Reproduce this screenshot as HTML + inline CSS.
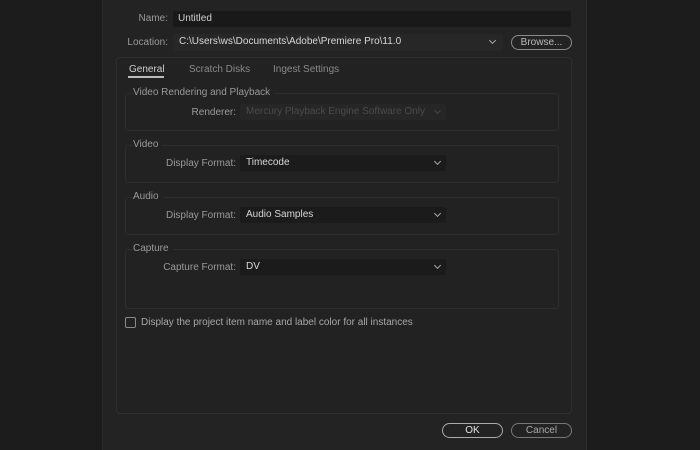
<!DOCTYPE html><html><head><style>
body{margin:0;width:700px;height:450px;background:#1c1c1c;position:relative;overflow:hidden;font-family:"Liberation Sans",sans-serif;font-size:10px;color:#a8a8a8}
div,span{position:absolute;box-sizing:border-box;white-space:nowrap}
.dlg{left:102px;top:0;width:485px;height:450px;background:#232323;border-left:1px solid #2c2c2c;border-right:1px solid #2c2c2c}
.lbl{text-align:right;color:#9a9a9a}
.inp{background:#191919;border-radius:2px;color:#d0d0d0;padding-left:5px;line-height:16px}
.sel{background:#1b1b1b;color:#d8d8d8;padding-left:6px;line-height:16px;border-radius:2px}
.chev{right:6px;top:4px;width:5px;height:5px;border-right:1.3px solid #aaa;border-bottom:1.3px solid #aaa;transform:rotate(45deg)}
.grp{border:1px solid #2d2d2d;border-radius:3px;left:125px;width:434px}
.gt{left:133px;color:#9a9a9a;background:#222;padding-right:4px}
.btn{border:1.5px solid #8a8a8a;border-radius:8px;display:flex;align-items:center;justify-content:center;color:#cfcfcf}
</style></head><body>
<div class="dlg"></div>
<div class="lbl" style="left:100px;width:68px;top:13px">Name:</div>
<div class="inp" style="left:173px;top:11px;width:398px;height:16px">Untitled</div>
<div class="lbl" style="left:100px;width:68px;top:37px">Location:</div>
<div class="sel" style="left:173px;top:34px;width:330px;height:17px;background:#272727">C:\Users\ws\Documents\Adobe\Premiere Pro\11.0<div class="chev" style="right:8px"></div></div>
<div class="btn" style="left:511px;top:35px;width:61px;height:15px;color:#bbb">Browse...</div>
<div style="left:116px;top:57px;width:456px;height:357px;border:1px solid #2e2e2e;border-radius:4px;background:#222"></div>
<div style="left:129px;top:64px;color:#d0d0d0">General</div>
<div style="left:128px;top:76px;width:36px;height:1.5px;background:#bbb"></div>
<div style="left:189px;top:64px;color:#8a8a8a">Scratch Disks</div>
<div style="left:273px;top:64px;color:#8a8a8a">Ingest Settings</div>
<div class="grp" style="top:93px;height:38px"></div><div class="gt" style="top:87px">Video Rendering and Playback</div>
<div class="lbl" style="left:150px;width:86px;top:107px">Renderer:</div>
<div class="sel" style="left:240px;top:104px;width:206px;height:16px;background:#262626;color:#4a4a4a">Mercury Playback Engine Software Only<div class="chev" style="border-color:#444"></div></div>
<div class="grp" style="top:145px;height:38px"></div><div class="gt" style="top:139px">Video</div>
<div class="lbl" style="left:130px;width:106px;top:158px">Display Format:</div>
<div class="sel" style="left:240px;top:155px;width:206px;height:16px">Timecode<div class="chev"></div></div>
<div class="grp" style="top:197px;height:38px"></div><div class="gt" style="top:191px">Audio</div>
<div class="lbl" style="left:130px;width:106px;top:210px">Display Format:</div>
<div class="sel" style="left:240px;top:207px;width:206px;height:16px">Audio Samples<div class="chev"></div></div>
<div class="grp" style="top:249px;height:60px"></div><div class="gt" style="top:243px">Capture</div>
<div class="lbl" style="left:130px;width:106px;top:262px">Capture Format:</div>
<div class="sel" style="left:240px;top:259px;width:206px;height:16px">DV<div class="chev"></div></div>
<div style="left:125px;top:317px;width:11px;height:11px;border:1.3px solid #8a8a8a;border-radius:2px"></div>
<div style="left:141px;top:317px;color:#a8a8a8">Display the project item name and label color for all instances</div>
<div class="btn" style="left:442px;top:423px;width:61px;height:15px;border-color:#aaa;color:#e0e0e0">OK</div>
<div class="btn" style="left:511px;top:423px;width:61px;height:15px;border-color:#777;color:#aaa">Cancel</div>
</body></html>
